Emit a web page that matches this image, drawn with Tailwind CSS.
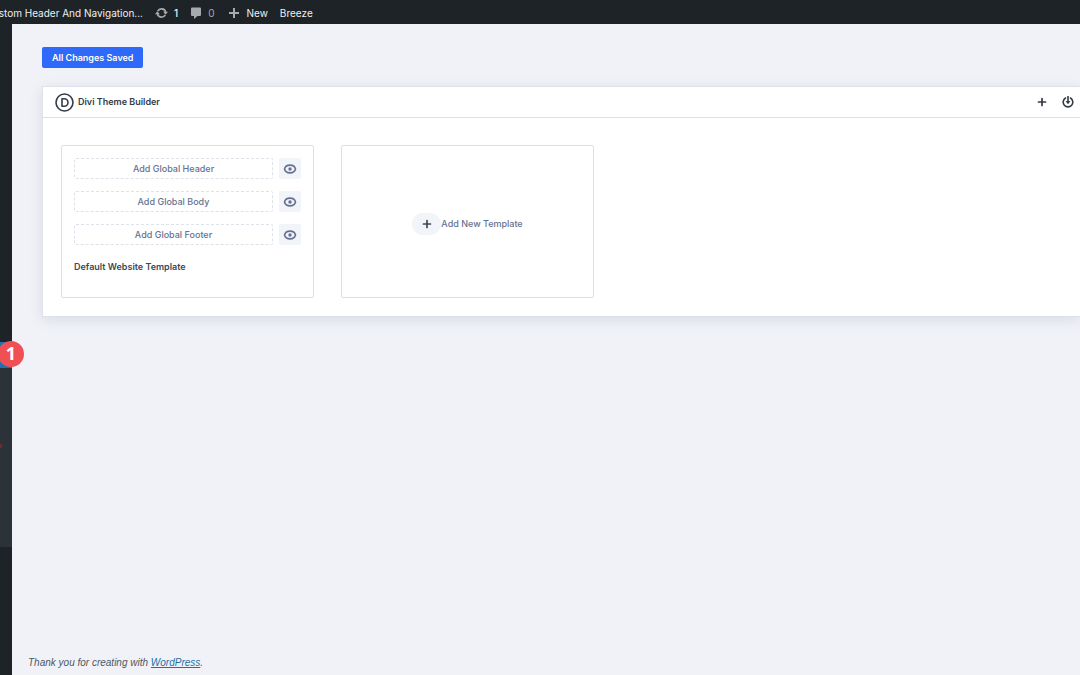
<!DOCTYPE html>
<html lang="en">
<head>
<meta charset="utf-8">
<meta name="viewport" content="width=device-width, initial-scale=1">
<title>Divi Theme Builder</title>
<script src="https://cdn.jsdelivr.net/npm/@tailwindcss/browser@4"></script>
</head>
<body class="flex min-h-screen flex-col overflow-x-hidden bg-[#f0f2f7] font-['Inter',sans-serif] text-[9px] leading-4">
<svg class="hidden" aria-hidden="true">
  <symbol id="eye" viewBox="0 0 14 12"><path d="M1.500 6C2.200 3.400 4.300 2.100 7 2.100s4.800 1.300 5.500 3.900C11.800 8.600 9.700 9.900 7 9.900S2.200 8.600 1.500 6Z" fill="none" stroke="currentColor" stroke-width="1.600" stroke-linejoin="round"/><circle cx="7" cy="6" r="1.700" fill="currentColor"/></symbol>
  <symbol id="plus" viewBox="0 0 10 10"><path d="M5 1.500v7M1.500 5h7" fill="none" stroke="currentColor" stroke-width="1.700" stroke-linecap="round"/></symbol>
</svg>

<header class="flex h-6 items-center bg-[#1d2327] pt-px text-[10px] text-[#f0f0f1]">
  <a href="#" class="flex w-[143px] justify-end overflow-hidden text-[10px] whitespace-nowrap">Custom Header And Navigation...</a>
  <a href="#" class="ml-3 flex items-center gap-1.5" aria-label="1 update">
    <svg class="h-3 w-[13px] text-[#a7aaad]" viewBox="0 0 13 12"><path d="M2.800 4.200A4.200 4.200 0 0 1 10.600 5M10.200 7.800A4.200 4.200 0 0 1 2.400 7" fill="none" stroke="currentColor" stroke-width="1.700"/><path d="M8.200 4.800h4.800l-2.400 2.900ZM0 7.200h4.800L2.400 4.300Z" fill="currentColor"/></svg>
    <span class="font-medium">1</span>
  </a>
  <a href="#" class="ml-3 flex items-center gap-1.5 text-[#a7aaad]" aria-label="0 comments">
    <svg class="h-3 w-3" viewBox="0 0 12 12"><path d="M2 .5h8a1 1 0 0 1 1 1V8a1 1 0 0 1-1 1H7.500L4 12V9H2a1 1 0 0 1-1-1V1.500a1 1 0 0 1 1-1Z" fill="currentColor"/></svg>
    <span>0</span>
  </a>
  <a href="#" class="ml-3.5 flex items-center gap-1.5">
    <svg class="h-3 w-3 text-[#a7aaad]" viewBox="0 0 12 12"><path d="M6 1v10M1 6h10" fill="none" stroke="currentColor" stroke-width="2"/></svg>
    <span>New</span>
  </a>
  <a href="#" class="ml-3">Breeze</a>
</header>

<div class="flex flex-1">
  <nav class="relative flex w-3 shrink-0 flex-col bg-[#1d2327]" aria-label="Admin menu">
    <a href="#" class="mt-[318px] h-[26px] bg-[#2271b1]" aria-label="Divi"></a>
    <div class="h-[179px] bg-[#2c3338]"><div class="mt-[76px] h-1 w-0.5 bg-[#6f2a31]"></div></div>
    <span class="absolute top-[317px] -left-0.5 flex size-[26px] items-center justify-center rounded-full bg-[#f05053] pb-0.5 font-['Open_Sans',sans-serif] text-lg leading-6 font-bold text-white">1</span>
  </nav>

  <div class="flex min-w-0 flex-1 flex-col">
    <main class="flex-1 pt-[23px] pl-[30px]">
      <button type="button" class="flex h-[21px] items-center rounded-xs bg-[#2e69f9] px-2.5 font-semibold text-white">All Changes Saved</button>
      <section class="mt-[18px] border border-r-0 border-[#dfe2ec] bg-white shadow-[0_3px_12px_rgba(60,70,110,0.13)]">
        <div class="flex h-[31px] items-center border-b border-[#dcdfe5] pr-1.5 pl-3 text-[#343b46]">
          <svg class="size-[19px]" viewBox="0 0 19 19" fill="none" stroke="currentColor"><circle cx="9.500" cy="9.500" r="8.500" stroke-width="1.600"/><path d="M7 5.800h2.300a3.700 3.700 0 0 1 0 7.400H7Z" stroke-width="1.600" stroke-linejoin="round"/></svg>
          <h1 class="ml-1 font-semibold">Divi Theme Builder</h1>
          <button type="button" class="ml-auto" aria-label="Add template"><svg class="size-2.5"><use href="#plus"/></svg></button>
          <button type="button" class="ml-[15px]" aria-label="Portability"><svg class="size-3" viewBox="0 0 12 12" fill="none" stroke="currentColor" stroke-width="1.600"><path d="M3.500 2a4.800 4.800 0 1 0 5 0M6 .5v6" stroke-linecap="round"/><path d="M3.600 5h4.800L6 8.300Z" fill="currentColor" stroke="none"/></svg></button>
        </div>
        <div class="flex flex-wrap gap-[27px] px-[18px] pt-[27px] pb-[18px] text-[#66718f]">
          <article class="h-[153px] w-[253px] rounded-xs border border-[#dcdfe9] p-3">
            <div class="flex flex-col gap-3 font-medium">
              <div class="flex gap-1.5">
                <button type="button" class="h-[21px] flex-1 rounded-xs border border-dashed border-[#dde1e9]">Add Global Header</button>
                <button type="button" class="flex h-[21px] w-[22px] items-center justify-center rounded-xs bg-[#f1f4f9]" aria-label="Toggle header visibility"><svg class="h-3 w-3.5"><use href="#eye"/></svg></button>
              </div>
              <div class="flex gap-1.5">
                <button type="button" class="h-[21px] flex-1 rounded-xs border border-dashed border-[#dde1e9]">Add Global Body</button>
                <button type="button" class="flex h-[21px] w-[22px] items-center justify-center rounded-xs bg-[#f1f4f9]" aria-label="Toggle body visibility"><svg class="h-3 w-3.5"><use href="#eye"/></svg></button>
              </div>
              <div class="flex gap-1.5">
                <button type="button" class="h-[21px] flex-1 rounded-xs border border-dashed border-[#dde1e9]">Add Global Footer</button>
                <button type="button" class="flex h-[21px] w-[22px] items-center justify-center rounded-xs bg-[#f1f4f9]" aria-label="Toggle footer visibility"><svg class="h-3 w-3.5"><use href="#eye"/></svg></button>
              </div>
            </div>
            <h2 class="mt-3.5 font-semibold text-[#414855]">Default Website Template</h2>
          </article>
          <button type="button" class="flex h-[153px] w-[253px] items-center justify-center rounded-xs border border-[#dcdfe9] pt-1 font-medium">
            <span class="flex h-[22px] w-[29px] items-center justify-center rounded-full bg-[#f1f4f9] text-[#414855]"><svg class="size-2.5"><use href="#plus"/></svg></span>
            <span>Add New Template</span>
          </button>
        </div>
      </section>
    </main>
    <footer class="pb-1 pl-4 font-['Liberation_Sans',sans-serif] text-[10px] text-[#50575e] italic">Thank you for creating with <a href="#" class="text-[#2271a6] underline">WordPress</a>.</footer>
  </div>
</div>
</body>
</html>
